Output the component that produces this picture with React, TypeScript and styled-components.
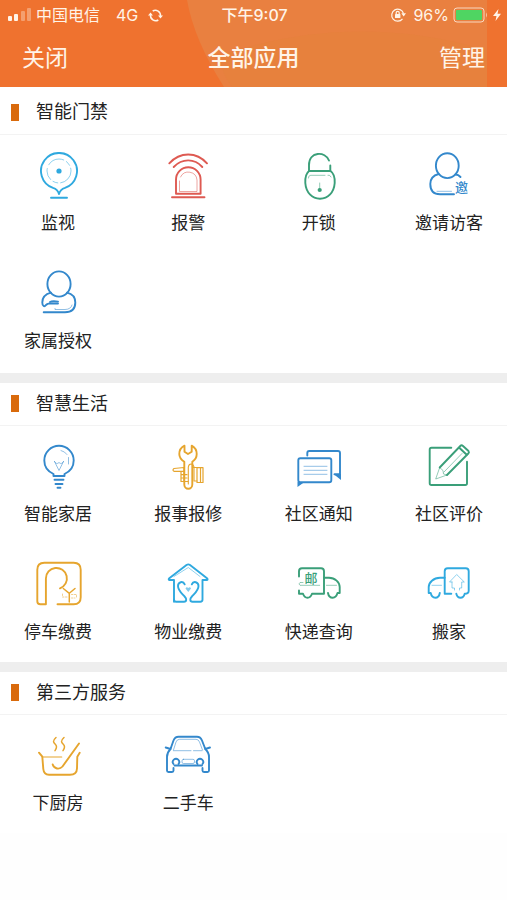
import React from 'react';
import styled, { createGlobalStyle } from 'styled-components';

const GlobalStyle = createGlobalStyle`
  *, *::before, *::after { box-sizing: border-box; }
  body {
    margin: 0;
    background: #fefefe;
    color: #222;
    font-family: Inter, "Noto Sans CJK SC", sans-serif;
  }
  button { font-family: inherit; color: inherit; }
`;

const colors = {
  sky: '#2fa9df',
  blue: '#3388cc',
  red: '#de5a52',
  green: '#3a9f79',
  amber: '#e6a52e',
};

/* ---------- header ---------- */

const Header = styled.header`
  position: relative;
  overflow: hidden;
  background: #ef722f;
  color: #fff4e8;
`;

const Backdrop = styled.svg`
  position: absolute;
  inset: 0;
  width: 100%;
  height: 100%;
`;

const StatusBar = styled.div`
  position: relative;
  display: grid;
  grid-template-columns: 1fr auto 1fr;
  align-items: center;
  height: 28px;
  padding: 2px 6px 0 8px;
  font-size: 16px;
  line-height: 24px;
`;

const StatusGroup = styled.div<{ $end?: boolean }>`
  display: flex;
  align-items: center;
  justify-content: ${(p) => (p.$end ? 'flex-end' : 'flex-start')};
  gap: 4px;
`;

const Network = styled.span`
  margin: 0 6px 0 12px;
`;

const Time = styled.time`
  font-weight: 500;
`;

const Percent = styled.span`
  margin-left: 3px;
`;

const NavBar = styled.nav`
  position: relative;
  display: grid;
  grid-template-columns: 1fr auto 1fr;
  align-items: center;
  height: 59px;
  padding: 0 22px;
`;

const NavButton = styled.button<{ $end?: boolean }>`
  justify-self: ${(p) => (p.$end ? 'end' : 'start')};
  padding: 0;
  border: 0;
  background: none;
  font-size: 23px;
  line-height: 32px;
  cursor: pointer;
`;

const PageTitle = styled.h1`
  margin: 0;
  font-size: 23px;
  line-height: 32px;
  font-weight: 500;
`;

/* ---------- sections ---------- */

const Section = styled.section`
  background: #fff;

  & + & {
    border-top: 10px solid #eee;
  }
`;

const SectionHead = styled.div<{ $tall?: boolean }>`
  display: flex;
  align-items: center;
  gap: 17px;
  height: ${(p) => (p.$tall ? 48 : 43)}px;
  padding: ${(p) => (p.$tall ? '3px 11px 0' : '0 11px 1px')};
  border-bottom: 1px solid #f3f3f3;
`;

const Marker = styled.span`
  width: 8px;
  height: 17px;
  background: #d96a0c;
`;

const SectionTitle = styled.h2`
  margin: 0;
  font-size: 18px;
  line-height: 26px;
  font-weight: 400;
`;

const AppGrid = styled.ul<{ $spaced?: boolean }>`
  display: grid;
  grid-template-columns: repeat(4, 116px);
  justify-content: space-between;
  margin: 0;
  padding: 0 0 ${(p) => (p.$spaced ? 2 : 0)}px;
  list-style: none;
`;

const AppTile = styled.button`
  display: flex;
  flex-direction: column;
  align-items: center;
  gap: 12px;
  width: 100%;
  height: 118px;
  padding: 17px 0 0;
  border: 0;
  background: none;
  font-size: 17px;
  line-height: 22px;
  white-space: nowrap;
  cursor: pointer;
`;

const Glyph = styled.svg<{ $tone: string }>`
  flex: none;
  width: 48px;
  height: 48px;
  color: ${(p) => p.$tone};
  fill: none;
  stroke: currentColor;
  stroke-width: 1.9;
  stroke-linecap: round;
  stroke-linejoin: round;

  .thin { stroke-width: 0.9; opacity: 0.6; }
  .solid { fill: currentColor; stroke: none; }
  text {
    fill: currentColor;
    stroke: none;
    font-size: 13px;
    font-weight: 500;
    font-family: "Noto Sans CJK SC", sans-serif;
  }
`;

/* ---------- icon drawings, 48 x 48 ---------- */

const drawings: Record<string, React.ReactNode> = {
  monitor: (
    <>
      <path d="M25 42C24 38.5 22.5 37 19 35.900A18 18 0 1 1 31 35.900C27.500 37 26 38.500 25 42Z" />
      <circle className="thin" cx="25" cy="19" r="12" strokeDasharray="17 3 5 3 12 4" />
      <circle className="solid" cx="25" cy="19" r="2.6" />
      <path d="M17 45.700H33" />
    </>
  ),
  alarm: (
    <>
      <path d="M5.300 11.300C16 -.5 32.500 -.5 43 11.300M9.700 15C18 6.200 30.500 6.200 38.300 15" />
      <path d="M12 41.700V27.500A12.300 12.300 0 0 1 36.600 27.500V41.700ZM8 45.200H40.500" />
      <path className="thin" d="M15.500 29V39.500H33V28A8.700 8.700 0 0 0 16.500 25" />
    </>
  ),
  lock: (
    <>
      <path d="M14 18.500V13C14 -1 30.500 -1 34 8.500M35.300 13.500V18.500" />
      <path d="M14 19H35.500C39 21.500 40 26 39.700 31C39 40.500 33 46.700 25 46.700S11 40.500 10.300 31C10 26 11 21.500 14 19Z" />
      <path className="thin" d="M13.500 26C13.500 24 14.500 23.300 16 23.300H30M33 23.300H34.500L36 25" />
      <path className="thin" d="M24.700 31V37" />
      <circle className="solid" cx="24.700" cy="38" r="2.100" />
    </>
  ),
  visitor: (
    <>
      <ellipse cx="22.300" cy="13.700" rx="11.400" ry="12.400" />
      <path d="M13.700 22C8 23.500 5.300 27 5.300 32C5.300 38.500 8 42.300 15 42.300H29M30.500 22.500C32.500 22.500 34 23.300 35.500 25" />
      <path className="thin" d="M12 39.300H26.500" />
      <text x="30" y="40">邀</text>
    </>
  ),
  family: (
    <>
      <ellipse cx="25" cy="14" rx="11.600" ry="12.600" />
      <path d="M17 22.700C12 24 8.300 27.500 8.300 32.500C8.300 36.500 10.500 37 12 35C14 33 15 33.500 24 33.500" />
      <path d="M16 32C18 30.800 20 31 24 31.600" />
      <path d="M33 22.700C38.500 24 41.300 27.500 41.300 32.500C41.300 39 37.500 42.300 31 42.300H9.700" />
      <path className="thin" d="M21 38.500V39.500H31C35 39.500 37.500 37.500 38 35" />
    </>
  ),
  bulb: (
    <>
      <path d="M19.500 33V31C14 28.500 10.300 23.500 10.300 17.500A14.700 14.700 0 0 1 39.700 17.500C39.700 23.500 36 28.500 30.500 31V33Z" />
      <path d="M20.500 36.700H29.500M21.500 41H28.500M23.500 44.700H26.500" />
      <path className="thin" d="M20.500 18.500L25 27.500L29.500 18.500M20.500 18.500Q22.500 22 25 19.500Q27.500 22 29.500 18.500M27 7.500Q31 8.500 33 11.500M34.500 14.500V21" />
    </>
  ),
  wrench: (
    <>
      <path d="M20.500 2.700C17 4.500 15.300 7.500 15.300 11C15.300 14.500 17.500 17 20.300 18.700V41.500A4 4.200 0 0 0 28.300 41.500V18.700C31 17 32.700 14.500 32.700 11C32.700 7.500 31 4.500 27.700 2.700V8.700L24 11L20.500 8.700Z" />
      <path strokeWidth="1.100" d="M24.300 41V24C25 20 29 20 30 24V38H33" />
      <path strokeWidth="1.200" d="M20 24.500L10 25.500Q8 27 10 28.300H20M20 24.500V38.500M20 28.300H17V38.500H24M17 31.700H23M17 35H23M28.500 24.500H33M33 24.700H39V39.500H33ZM36.500 25V39" />
    </>
  ),
  notice: (
    <>
      <rect x="3.300" y="15.300" width="33" height="24" rx="2" />
      <path d="M12.300 12.500V10Q12.300 8 14.300 8H43Q45 8 45 10V31.300H39.500" />
      <path className="solid" d="M2.500 39V44L9.500 39ZM38.500 31H46V37Z" />
      <path className="thin" d="M9 23.300H32M9 27.300H32M9 31.300H32" />
    </>
  ),
  review: (
    <>
      <path d="M26.300 4.700H6.500Q4.700 4.700 4.700 6.500V40.200Q4.700 42 6.500 42H40.200Q42 42 42 40.200V18.700" />
      <path d="M14.700 24.500L35.300 3Q36.500 1.700 38 3L43.500 8Q44.500 9.300 43.300 10.500L22 32M34 4.500L42 12" />
      <path className="thin" d="M14.700 24.500L10.700 36L22 32M14.700 24.500L18 27.500L18.500 31L22 32M19 29L37 10.500" />
    </>
  ),
  parking: (
    <>
      <path d="M23.500 43.300H39.700Q46.700 43.300 46.700 36.300V8.700Q46.700 1.700 39.700 1.700H10.300Q3.300 1.700 3.300 8.700V40.300Q3.300 43.300 6.300 43.300H11.900V17.500A10.500 10.500 0 1 1 26 27.300" />
      <path strokeWidth="1.500" d="M29.300 27.500L35.300 32.300L41 27.500M35.300 32.300V41" />
      <path className="thin" strokeDasharray="1.500 1.500" d="M28.500 33V36H33M37.500 33.500H42.500V37M37.500 37H41" />
    </>
  ),
  property: (
    <>
      <path d="M10 40.700V19H5.500Q4 18.500 5.300 17.300L22.500 4Q24.300 2.700 26 4L43 17.300Q44.300 18.500 42.800 19H38.500V38.500Q38.500 40.700 36.300 40.700H28.500C25.500 40.700 26 37.500 27.500 36C31 32 34.500 29.500 34.500 25C34.500 21 29.500 19.500 27.800 23.300" />
      <path d="M10 38.500Q10 40.700 12.200 40.700H20C23 40.700 22.500 37.500 21 36C17.500 32 14 29.500 14 25C14 21 19 19.500 20.700 23.300" />
      <path className="thin" d="M10 15.500L24.300 6.500L36 15.500" />
      <path className="solid" opacity=".6" d="M24.300 31L21.500 27.500Q22.500 25.500 24.300 27Q26 25.500 27 27.500Z" />
    </>
  ),
  express: (
    <>
      <path d="M4 15.500V10.300Q4 7.300 7 7.300H26Q29 7.300 29 10.300V32.700H17C16 35.500 14.500 36.700 12.500 36.700S9 35.500 8 32.700H4V29.500" />
      <path d="M29 16.700H34C40 16.700 44.700 21.500 44.700 26V32H42.500C41.500 35.500 40 36.700 37.700 36.700C35 36.700 33.500 35 33 32" />
      <path className="thin" d="M8 21.500H5Q3 23 5 24.300H24.700M31.500 24.300H41.500" />
      <text x="9.500" y="22">邮</text>
    </>
  ),
  moving: (
    <>
      <path d="M26.300 32.700H19.700V10.300Q19.700 7.300 22.700 7.300H40.700Q43.700 7.300 43.700 10.300V29.700Q43.700 32.700 39.700 32.700C39 35.500 37.500 36.700 35.500 36.700S32 35.500 31.300 32.700" />
      <path d="M19.700 16.700H15C8.500 16.700 3.700 21.500 3.700 26V32H5.700C6.500 35.500 8 36.700 10.300 36.700C13 36.700 14.300 35 14.800 32" />
      <path className="thin" d="M7 24.300H16.500M27 21H24.500L31.700 13.500L39.300 21H36.700V27H34.500V29M27 21V27H29.500V29" />
    </>
  ),
  kitchen: (
    <>
      <path d="M5 20.700L8.300 24.700L9.300 37Q9.800 42.700 15 42.700H36Q42.800 42.700 43 36.500L43.300 24.700L45.700 20.700" />
      <path strokeWidth="1.200" d="M8.300 25H27.700" />
      <path d="M45 11.500L28.500 34.500C25.500 38 20 37 18.700 32.500" />
      <path strokeWidth="1.500" d="M22 5.500C18 9 19.500 10.500 21.500 12.500S22.500 16.500 21 18.700M30 5.500C26 9 27.500 10.500 29.500 12.500S30.500 16.500 29 18.700" />
    </>
  ),
  car: (
    <>
      <path d="M1.700 15.500L6.500 17L9.500 8.500Q11 4.700 14.500 4.700H33Q36.500 4.700 38 8.500L41.300 17L46 15.500" />
      <path d="M6.500 17C4 19.500 3 22 3 25V38.500Q3 40 4.500 40H8Q9.500 40 9.500 38.500V36M41.300 17C44 19.500 45 22 45 25V38.500Q45 40 43.500 40H40Q38.500 40 38.500 38.500V36M10.500 33.500H38" />
      <path d="M9.500 32A3.200 3.200 0 1 1 14.500 32M33.500 32A3.200 3.200 0 1 1 38.500 32" />
      <rect className="thin" x="18" y="27.300" width="12.500" height="4.200" rx="1.500" />
      <path className="thin" d="M9.500 18L12 10Q13 7.300 15.500 7.300H32Q34.500 7.300 35.500 10L38.500 18M9.500 18.700H27M29.500 18.700H38" />
    </>
  ),
};

interface AppEntry { label: string; icon: string; tone: string; }
interface AppGroup { title: string; apps: AppEntry[]; }

const groups: AppGroup[] = [
  {
    title: '智能门禁',
    apps: [
      { label: '监视', icon: 'monitor', tone: colors.sky },
      { label: '报警', icon: 'alarm', tone: colors.red },
      { label: '开锁', icon: 'lock', tone: colors.green },
      { label: '邀请访客', icon: 'visitor', tone: colors.blue },
      { label: '家属授权', icon: 'family', tone: colors.blue },
    ],
  },
  {
    title: '智慧生活',
    apps: [
      { label: '智能家居', icon: 'bulb', tone: colors.blue },
      { label: '报事报修', icon: 'wrench', tone: colors.amber },
      { label: '社区通知', icon: 'notice', tone: colors.blue },
      { label: '社区评价', icon: 'review', tone: colors.green },
      { label: '停车缴费', icon: 'parking', tone: colors.amber },
      { label: '物业缴费', icon: 'property', tone: colors.sky },
      { label: '快递查询', icon: 'express', tone: colors.green },
      { label: '搬家', icon: 'moving', tone: colors.sky },
    ],
  },
  {
    title: '第三方服务',
    apps: [
      { label: '下厨房', icon: 'kitchen', tone: colors.amber },
      { label: '二手车', icon: 'car', tone: colors.blue },
    ],
  },
];

const SignalIcon = () => (
  <svg width="24" height="16" viewBox="0 0 24 16" fill="currentColor" aria-hidden="true">
    <rect x="0" y="9" width="4" height="5" rx="1" />
    <rect x="6" y="7" width="4" height="7" rx="1" />
    <rect x="13" y="4" width="4" height="10" rx="1" opacity=".35" />
    <rect x="19" y="1" width="4" height="13" rx="1" opacity=".35" />
  </svg>
);

const SyncIcon = () => (
  <svg width="15" height="15" viewBox="0 0 16 16" fill="none" stroke="currentColor" strokeWidth="1.600" aria-hidden="true">
    <path d="M5 3.200A5.500 5.500 0 0 1 13.300 8.500M11 12.800A5.500 5.500 0 0 1 2.700 7.500" />
    <path d="M10.700 8H16L13.300 11.300ZM0 8H5.300L2.700 4.700Z" fill="currentColor" stroke="none" />
  </svg>
);

const RotationLockIcon = () => (
  <svg width="16" height="16" viewBox="0 0 16 16" fill="none" stroke="currentColor" strokeWidth="1.200" aria-hidden="true">
    <path d="M13.500 6.500A6 6 0 1 0 12.500 11.800" />
    <path d="M11.300 6.300H16L13.700 9.500Z" fill="currentColor" stroke="none" />
    <rect x="5" y="7" width="5.400" height="4" rx=".5" fill="currentColor" stroke="none" />
    <path d="M6.200 7V5.800A1.500 1.500 0 0 1 9.200 5.800V7" />
  </svg>
);

const BatteryIcon = () => (
  <svg width="36" height="16" viewBox="0 0 36 16" aria-hidden="true">
    <rect x="1" y="1" width="30" height="14" rx="3" fill="none" stroke="currentColor" opacity=".75" />
    <rect x="3" y="3" width="26" height="10" rx="1" fill="#4fd562" />
    <path d="M33 5.500Q35 8 33 10.500Z" fill="currentColor" opacity=".6" />
  </svg>
);

const BoltIcon = () => (
  <svg width="8" height="12" viewBox="0 0 8 12" fill="currentColor" aria-hidden="true">
    <path d="M5.500 0L0 7H3.500L2.500 12L8 4.800H4.500Z" />
  </svg>
);

export default function App() {
  return (
    <>
      <GlobalStyle />
      <Header>
        <Backdrop viewBox="0 0 507 87" preserveAspectRatio="none" aria-hidden="true">
          <path d="M187 0Q194 40 224 87H487V0Z" fill="#e98040" />
          <path d="M219 56Q222 74 232 87H487V50Q350 10 219 56Z" fill="#e5823a" opacity=".5" />
        </Backdrop>
        <StatusBar>
          <StatusGroup>
            <SignalIcon />
            <span>中国电信</span>
            <Network>4G</Network>
            <SyncIcon />
          </StatusGroup>
          <Time>下午9:07</Time>
          <StatusGroup $end>
            <RotationLockIcon />
            <Percent>96%</Percent>
            <BatteryIcon />
            <BoltIcon />
          </StatusGroup>
        </StatusBar>
        <NavBar>
          <NavButton type="button">关闭</NavButton>
          <PageTitle>全部应用</PageTitle>
          <NavButton type="button" $end>管理</NavButton>
        </NavBar>
      </Header>
      <main>
        {groups.map((group, index) => (
          <Section key={group.title}>
            <SectionHead $tall={index === 0}>
              <Marker />
              <SectionTitle>{group.title}</SectionTitle>
            </SectionHead>
            <AppGrid $spaced={index === 0}>
              {group.apps.map((app) => (
                <li key={app.label}>
                  <AppTile type="button">
                    <Glyph $tone={app.tone} viewBox="0 0 48 48" aria-hidden="true">
                      {drawings[app.icon]}
                    </Glyph>
                    {app.label}
                  </AppTile>
                </li>
              ))}
            </AppGrid>
          </Section>
        ))}
      </main>
    </>
  );
}
